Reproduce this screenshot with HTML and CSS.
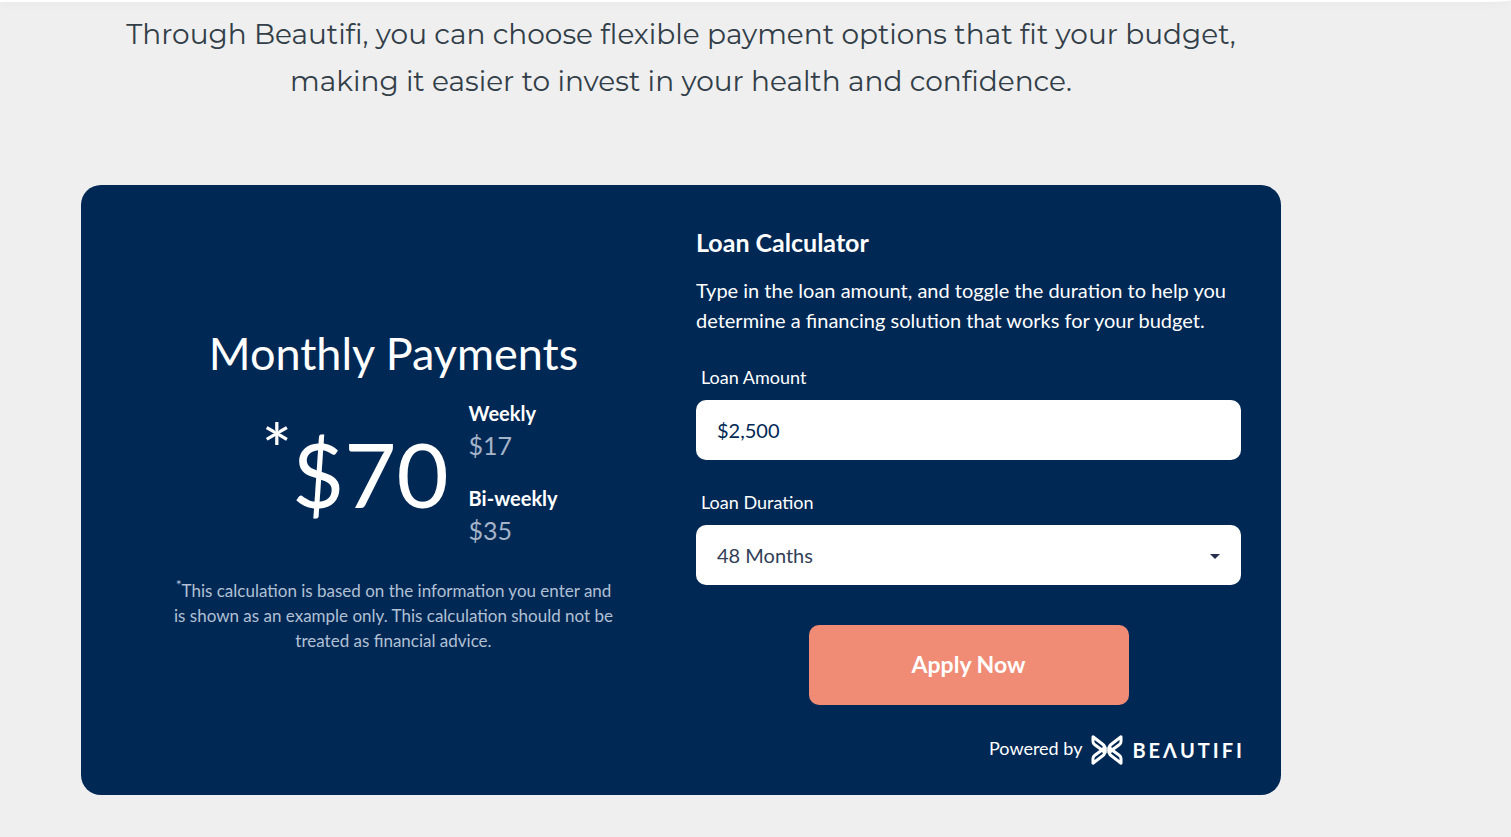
FILE: index.html
```html
<!DOCTYPE html>
<html lang="en">
<head>
  <meta charset="UTF-8">
  <meta name="viewport" content="width=device-width, initial-scale=1.0">
  <title>Beautifi Financing</title>
  <link rel="stylesheet" href="styles.css">
</head>
<body>
  <header class="top-bar"></header>
  <main class="container">
    <p class="intro">Through Beautifi, you can choose flexible payment options that fit your budget, making it easier to invest in your health and confidence.</p>

    <section class="calculator">
      <div class="payments">
        <h2>Monthly Payments</h2>
        <div class="amounts">
          <div class="monthly"><span class="star">*</span><span id="monthly">$70</span></div>
          <dl class="other">
            <dt>Weekly</dt>
            <dd id="weekly">$17</dd>
            <dt>Bi-weekly</dt>
            <dd id="biweekly">$35</dd>
          </dl>
        </div>
        <p class="disclaimer"><sup>*</sup>This calculation is based on the information you enter and is shown as an example only. This calculation should not be treated as financial advice.</p>
      </div>

      <form class="loan-form">
        <h3>Loan Calculator</h3>
        <p class="help">Type in the loan amount, and toggle the duration to help you determine a financing solution that works for your budget.</p>
        <div class="form-group">
          <label for="amount">Loan Amount</label>
          <input type="text" id="amount" value="$2,500">
        </div>
        <div class="form-group">
          <label for="duration">Loan Duration</label>
          <div class="select-wrap">
            <select id="duration">
              <option>12 Months</option>
              <option>24 Months</option>
              <option>36 Months</option>
              <option selected>48 Months</option>
              <option>60 Months</option>
            </select>
            <svg class="arrow" viewBox="0 0 10 5" aria-hidden="true"><path d="M0 0h10L5 5z"/></svg>
          </div>
        </div>
        <button type="button">Apply Now</button>
        <div class="powered">
          <span>Powered by</span>
          <a href="#" class="logo">
            <svg class="butterfly" viewBox="0 0 32 30" aria-hidden="true">
              <g id="wing">
                <path d="M2 1.800L12 9.500Q14.200 11.300 14.200 15Q14.200 18.700 12 20.500L2 28.200V23.500Q2 21.500 3.800 20.200L11 15L3.800 9.800Q2 8.500 2 6.500z"/>
                <path d="M10.500 14.700L14 12.500v5L10.500 15.300"/>
              </g>
              <use href="#wing" transform="matrix(-1 0 0 1 32 0)"/>
            </svg>
            <span>BEΛUTIFI</span>
          </a>
        </div>
      </form>
    </section>
  </main>
</body>
</html>
```
FILE: styles.css
```css
* {
  box-sizing: border-box;
}
body {
  margin: 0;
  background: #efefef;
  color: #fff;
  font-family: Lato, sans-serif;
}
h2, h3, p, dl, dd {
  margin: 0;
}
.top-bar {
  height: 2px;
  background: #fff;
  border-bottom-right-radius: 30px 2px;
  box-shadow: 0 0 10px rgba(0, 0, 0, 0.1);
}
.container {
  max-width: 1361px;
  padding: 9px 80px 42px 81px;
  margin-right: 150px;
}
.intro {
  margin-bottom: 80px;
  color: #323e48;
  font: 400 28px/47px Montserrat, Inter, sans-serif;
  text-align: center;
}
.calculator {
  display: grid;
  grid-template-columns: 1fr 1fr;
  gap: 30px;
  padding: 40px 40px 30px;
  background: #002855;
  border-radius: 20px;
}
.payments {
  display: flex;
  flex-direction: column;
  align-items: center;
  justify-content: center;
  padding-bottom: 12px;
}
.payments h2 {
  font-size: 45px;
  font-weight: 400;
  line-height: 54px;
}
.amounts {
  display: flex;
  align-items: center;
  gap: 20px;
  margin: 18px 0 20px 32px;
}
.monthly {
  display: flex;
  padding-bottom: 10px;
  font-size: 90px;
  line-height: 110px;
}
.star {
  font-size: 72px;
  line-height: 60px;
}
.other dt {
  font-size: 20px;
  font-weight: 700;
  line-height: 30px;
}
.other dd {
  margin-bottom: 20px;
  color: #a4b3c8;
  font-size: 25px;
  line-height: 35px;
}
.other dd:last-child {
  margin-bottom: 10px;
}
.disclaimer {
  max-width: 450px;
  color: #b2c0d4;
  font-size: 17px;
  line-height: 25px;
  text-align: center;
}
.disclaimer sup {
  font-size: 14px;
  line-height: 0;
}
.loan-form {
  display: flex;
  flex-direction: column;
}
.loan-form h3 {
  margin-bottom: 15px;
  font-size: 25px;
  line-height: 35px;
}
.help {
  margin-bottom: 30px;
  font-size: 20px;
  line-height: 30px;
}
.form-group {
  margin-bottom: 30px;
}
.form-group label {
  display: block;
  padding-left: 5px;
  margin-bottom: 10px;
  font-size: 18px;
  line-height: 25px;
}
.form-group input,
.form-group select {
  display: block;
  width: 100%;
  height: 60px;
  padding: 0 21px;
  border: 0;
  border-radius: 10px;
  background: #fff;
  color: #002855;
  font: 400 20px Lato, sans-serif;
  appearance: none;
}
.form-group select {
  color: #323e57;
}
.select-wrap {
  position: relative;
}
.arrow {
  position: absolute;
  top: 29px;
  right: 21px;
  width: 10px;
  height: 5px;
  fill: #27304f;
  pointer-events: none;
}
button {
  align-self: center;
  width: 320px;
  height: 80px;
  margin: 10px 0 30px;
  padding: 0 0 2px;
  border: 0;
  border-radius: 10px;
  background: #f08b76;
  color: #fff;
  font: 700 23px Lato, sans-serif;
  cursor: pointer;
}
.powered {
  display: flex;
  justify-content: flex-end;
  gap: 9px;
  font-size: 18px;
  line-height: 26px;
}
.logo {
  display: flex;
  align-items: center;
  gap: 9px;
  margin-right: -4px;
  color: #fff;
  font-size: 20px;
  font-weight: 700;
  letter-spacing: 3px;
  text-decoration: none;
}
.butterfly {
  width: 32px;
  height: 30px;
  fill: none;
  stroke: #fff;
  stroke-width: 3;
  stroke-linejoin: round;
}
```
